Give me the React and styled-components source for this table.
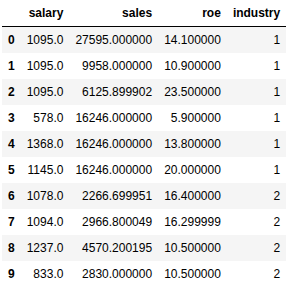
import React from "react";
import styled, { createGlobalStyle } from "styled-components";

const GlobalStyle = createGlobalStyle`
  body {
    margin: 0;
    background: #ffffff;
    font-family: "Liberation Sans", Arial, sans-serif;
  }
`;

const Wrapper = styled.div`
  padding: 0 0 0 2px;
`;

const Table = styled.table`
  border: none;
  border-collapse: collapse;
  border-spacing: 0;
  color: #000000;
  font-size: 12px;
  table-layout: fixed;
`;

const Head = styled.thead`
  border-bottom: 1px solid #000000;
  vertical-align: bottom;
`;

const Row = styled.tr`
  background: ${({ $striped }) => ($striped ? "#f5f5f5" : "transparent")};
`;

const HeadCell = styled.th`
  text-align: right;
  vertical-align: middle;
  padding: 6px;
  line-height: 14px;
  white-space: normal;
  font-weight: bold;
  border: none;
`;

const Cell = styled.td`
  text-align: right;
  vertical-align: middle;
  padding: 6px;
  line-height: 14px;
  white-space: normal;
  border: none;
`;

const columns = ["salary", "sales", "roe", "industry"];

const rows = [
  ["1095.0", "27595.000000", "14.100000", "1"],
  ["1095.0", "9958.000000", "10.900000", "1"],
  ["1095.0", "6125.899902", "23.500000", "1"],
  ["578.0", "16246.000000", "5.900000", "1"],
  ["1368.0", "16246.000000", "13.800000", "1"],
  ["1145.0", "16246.000000", "20.000000", "1"],
  ["1078.0", "2266.699951", "16.400000", "2"],
  ["1094.0", "2966.800049", "16.299999", "2"],
  ["1237.0", "4570.200195", "10.500000", "2"],
  ["833.0", "2830.000000", "10.500000", "2"],
];

export default function App() {
  return (
    <>
      <GlobalStyle />
      <Wrapper>
        <Table>
          <Head>
            <tr>
              <HeadCell />
              {columns.map((c) => (
                <HeadCell key={c}>{c}</HeadCell>
              ))}
            </tr>
          </Head>
          <tbody>
            {rows.map((r, i) => (
              <Row key={i} $striped={i % 2 === 0}>
                <HeadCell>{i}</HeadCell>
                {r.map((v, j) => (
                  <Cell key={j}>{v}</Cell>
                ))}
              </Row>
            ))}
          </tbody>
        </Table>
      </Wrapper>
    </>
  );
}
